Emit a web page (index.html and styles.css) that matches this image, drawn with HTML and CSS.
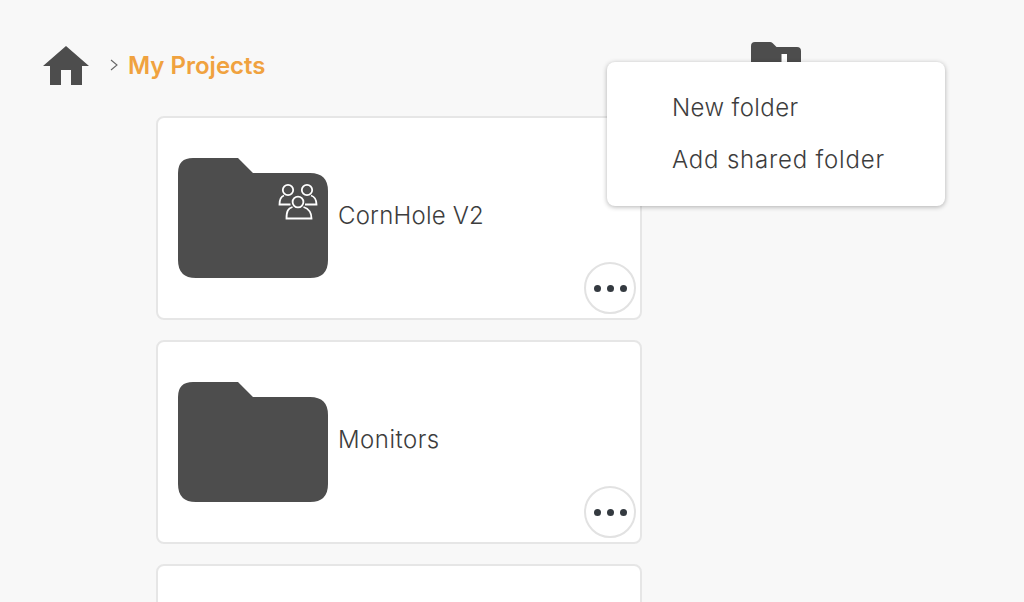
FILE: index.html
```html
<!DOCTYPE html>
<html lang="en">
<head>
<meta charset="utf-8">
<title>My Projects</title>
<link rel="stylesheet" href="styles.css">
</head>
<body>
<div class="page">
  <header class="header">
    <svg class="home" viewBox="0 0 46 39" aria-hidden="true"><path d="M23 0 46 20H39V39H28V24H18V39H7V20H0Z"/></svg>
    <svg class="chevron" viewBox="0 0 8 12" aria-hidden="true"><path d="M1 1 7 6 1 11"/></svg>
    <h1 class="crumb">My Projects</h1>
    <svg class="add-folder" viewBox="0 0 50 34" aria-hidden="true"><path d="M4 0H19Q20.500 0 21.500 1L25.500 5H46Q50 5 50 9V34H0V4Q0 0 4 0Z"/><path class="plus" d="M30.500 12H36V30H30.500Z"/></svg>
  </header>
  <main class="list">
    <section class="card">
      <div class="folder">
        <svg class="folder-shape" viewBox="0 0 150 120" aria-hidden="true"><path d="M15 0H60L75 15H132Q150 15 150 33V102Q150 120 132 120H18Q0 120 0 102V15Q0 0 15 0Z"/></svg>
        <svg class="people" viewBox="0 0 40 38" aria-hidden="true">
          <circle cx="10" cy="7" r="5.200"/>
          <circle cx="29" cy="7" r="5.200"/>
          <path d="M6 12.500C3 13.500 1.500 16 1.500 21.500H12.500"/>
          <path d="M33 12.500C36 13.500 38.500 16 38.500 21.500H27"/>
          <circle cx="20" cy="19" r="5.400"/>
          <path d="M14.500 24C10 25.500 8.500 28 8.500 35.500H33.500C33.500 28 30 25.500 25.500 24"/>
        </svg>
      </div>
      <span class="name">CornHole V2</span>
      <button class="more" type="button" aria-label="More"><i></i><i></i><i></i></button>
    </section>
    <section class="card">
      <div class="folder">
        <svg class="folder-shape" viewBox="0 0 150 120" aria-hidden="true"><path d="M15 0H60L75 15H132Q150 15 150 33V102Q150 120 132 120H18Q0 120 0 102V15Q0 0 15 0Z"/></svg>
      </div>
      <span class="name name-wide">Monitors</span>
      <button class="more" type="button" aria-label="More"><i></i><i></i><i></i></button>
    </section>
    <section class="card"></section>
  </main>
  <nav class="menu">
    <a class="menu-item">New folder</a>
    <a class="menu-item menu-item-long">Add shared folder</a>
  </nav>
</div>
</body>
</html>
```
FILE: styles.css
```css
* { box-sizing: border-box; }
html, body { margin: 0; height: 100%; overflow: hidden; }
body { background: #f8f8f8; color: #3d3d3d; font-family: "Inter", "Liberation Sans", sans-serif; }
.page { position: relative; height: 602px; overflow: hidden; }
.header { display: flex; align-items: center; height: 116px; padding: 14px 0 0 43px; position: relative; }
.home { width: 46px; height: 39px; fill: #4d4d4d; flex: none; }
.chevron { width: 8px; height: 12px; margin-left: 21px; fill: none; stroke: #666; stroke-width: 1.100; flex: none; }
.crumb { margin: 0 0 0 10px; font-size: 24px; font-weight: 600; color: #f0a23f; letter-spacing: 0; }
.add-folder { position: absolute; left: 751px; top: 42px; width: 50px; height: 34px; fill: #4d4d4d; }
.plus { fill: #fff; }
.list { display: flex; flex-direction: column; gap: 20px; margin-left: 156px; width: 486px; }
.card { position: relative; display: flex; align-items: center; flex: none; height: 204px; padding-left: 20px; background: #fff; border: 2px solid #e6e6e6; border-radius: 8px; }
.folder { position: relative; width: 150px; height: 120px; flex: none; }
.folder-shape { display: block; width: 150px; height: 120px; fill: #4d4d4d; }
.people { position: absolute; left: 100px; top: 25px; width: 40px; height: 38px; fill: none; stroke: #fff; stroke-width: 1.800; }
.name { margin: 0 0 6px 10px; font-size: 24px; font-weight: 350; color: #3d3d3d; letter-spacing: 0.2px; }
.name-wide { letter-spacing: 0.5px; }
.more { position: absolute; right: 4px; bottom: 4px; display: flex; align-items: center; justify-content: center; gap: 6px; width: 52px; height: 52px; padding: 0; background: #fff; border: 2px solid #e2e2e2; border-radius: 50%; }
.more i { width: 7px; height: 7px; border-radius: 50%; background: #343a40; }
.menu { position: absolute; left: 607px; top: 62px; display: flex; flex-direction: column; gap: 8px; width: 338px; height: 144px; padding: 24px 0 0 66px; background: #fff; border-radius: 8px; box-shadow: 0 1px 5px rgba(0,0,0,.3); }
.menu-item { display: block; height: 44px; line-height: 44px; font-size: 24px; font-weight: 350; color: #3d3d3d; letter-spacing: 0.4px; margin-left: -1px; }
.menu-item-long { letter-spacing: 0.8px; }
```
